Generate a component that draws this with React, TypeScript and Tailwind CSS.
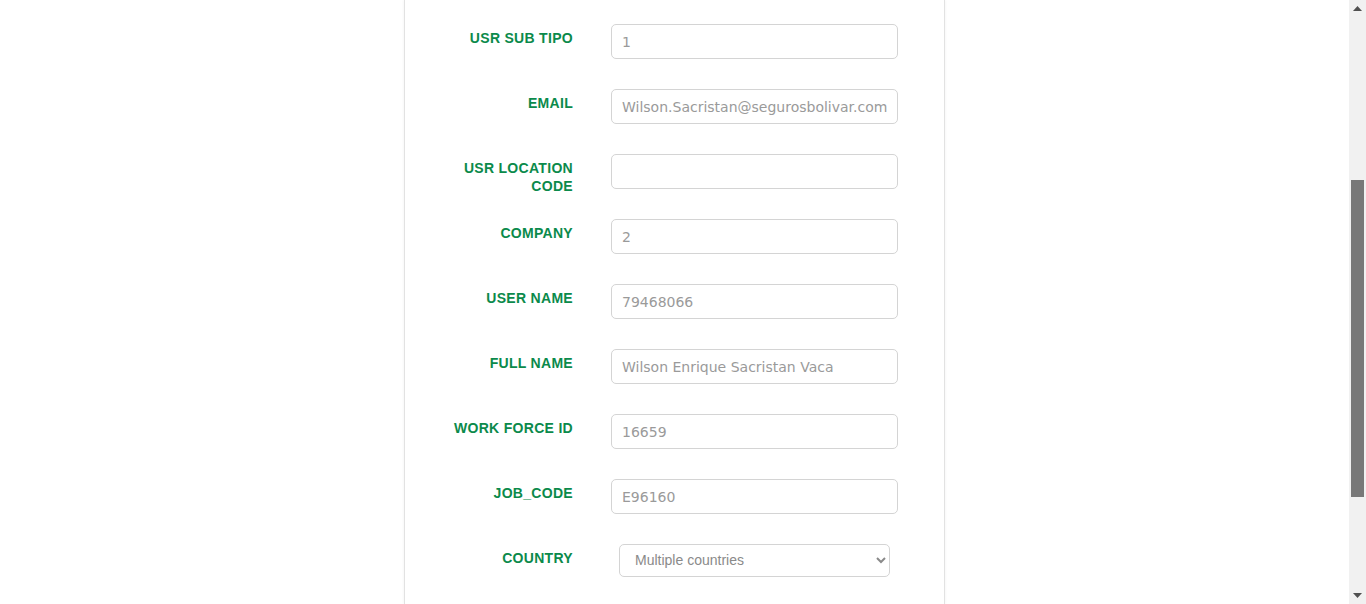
import React from "react";

type Field = {
  label: string;
  value: string;
};

const fields: Field[] = [
  { label: "USR SUB TIPO", value: "1" },
  { label: "EMAIL", value: "Wilson.Sacristan@segurosbolivar.com" },
  { label: "USR LOCATION CODE", value: "" },
  { label: "COMPANY", value: "2" },
  { label: "USER NAME", value: "79468066" },
  { label: "FULL NAME", value: "Wilson Enrique Sacristan Vaca" },
  { label: "WORK FORCE ID", value: "16659" },
  { label: "JOB_CODE", value: "E96160" },
];

function FormRow({ label, value }: Field) {
  return (
    <div className="flex items-start h-[65px]">
      <label className="w-[140px] pt-[5px] text-right text-[14px] leading-[18px] font-bold tracking-[0.3px] text-[#0b8a4b] font-['Liberation_Sans',Arial,sans-serif]">
        {label}
      </label>
      <input
        type="text"
        readOnly
        value={value}
        className="ml-[38px] w-[287px] h-[35px] px-[10px] rounded-[5px] border border-[#d4d4d4] bg-white text-[14px] text-[#9a9a9a] font-['DejaVu_Sans',Verdana,sans-serif] outline-none"
      />
    </div>
  );
}

// barra de rolagem falsa, igual à do navegador
function Scrollbar() {
  return (
    <div className="w-[17px] h-full bg-[#f1f1f1] flex flex-col items-center">
      <div className="h-[17px] flex items-center justify-center">
        <svg width="9" height="5" viewBox="0 0 9 5">
          <polygon points="0,5 4.5,0 9,5" fill="#505050" />
        </svg>
      </div>
      <div className="h-[163px]" />
      <div className="w-[13px] h-[317px] bg-[#787878]" />
      <div className="flex-1" />
      <div className="h-[17px] flex items-center justify-center">
        <svg width="9" height="5" viewBox="0 0 9 5">
          <polygon points="0,0 9,0 4.5,5" fill="#505050" />
        </svg>
      </div>
    </div>
  );
}

export default function App() {
  return (
    <div className="h-[604px] w-full flex overflow-hidden bg-white">
      <main className="flex-1 flex justify-center">
        <div className="w-[541px] h-full border-x border-[#e2e2e2] shadow-[0_0_3px_rgba(0,0,0,0.06)] bg-white pt-[24px] pl-[28px]">
          {fields.map((f) => (
            <FormRow key={f.label} label={f.label} value={f.value} />
          ))}

          {/* País */}
          <div className="flex items-start h-[65px]">
            <label className="w-[140px] pt-[5px] text-right text-[14px] leading-[18px] font-bold tracking-[0.3px] text-[#0b8a4b] font-['Liberation_Sans',Arial,sans-serif]">
              COUNTRY
            </label>
            <select
              defaultValue="multi"
              className="ml-[46px] w-[271px] h-[33px] pl-[11px] pr-1 pb-px rounded-[5px] border border-[#d4d4d4] bg-white text-[14px] text-[#8a8a8a] font-['Liberation_Sans',Arial,sans-serif] outline-none"
            >
              <option value="multi">Multiple countries</option>
              <option value="co">Colombia</option>
            </select>
          </div>
        </div>
      </main>
      <Scrollbar />
    </div>
  );
}
